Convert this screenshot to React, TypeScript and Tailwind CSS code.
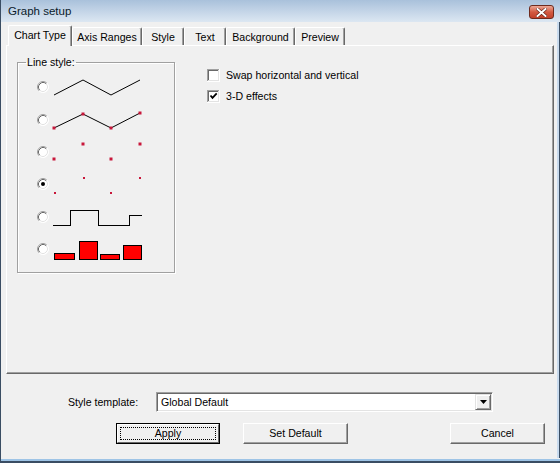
import React from "react";

const tabs = [
  { label: "Chart Type", w: "w-[64px]" },
  { label: "Axis Ranges", w: "w-[70px]" },
  { label: "Style", w: "w-[42px]" },
  { label: "Text", w: "w-[42px]" },
  { label: "Background", w: "w-[69px]" },
  { label: "Preview", w: "w-[50px]" },
];

function Radio({ checked = false }: { checked?: boolean }) {
  return (
    <svg width="12" height="12" viewBox="0 0 12 12" className="shrink-0">
      <circle cx="6" cy="6" r="5.5" fill="#fff" />
      <path d="M9.89 2.11 A5.5 5.5 0 0 0 2.11 9.89" fill="none" stroke="#a0a0a0" />
      <path d="M2.11 9.89 A5.5 5.5 0 0 0 9.89 2.11" fill="none" stroke="#ffffff" />
      <path d="M9.18 2.82 A4.5 4.5 0 0 0 2.82 9.18" fill="none" stroke="#696969" />
      <path d="M2.82 9.18 A4.5 4.5 0 0 0 9.18 2.82" fill="none" stroke="#e3e3e3" />
      {checked && <circle cx="6" cy="6" r="2" fill="#000" />}
    </svg>
  );
}

function Checkbox({ checked = false }: { checked?: boolean }) {
  return (
    <svg width="13" height="13" viewBox="0 0 13 13" className="shrink-0" shapeRendering="crispEdges">
      <rect x="0" y="0" width="13" height="13" fill="#fff" />
      <path d="M0.5 12 V0.5 H12" fill="none" stroke="#a0a0a0" />
      <path d="M1.5 11 V1.5 H11" fill="none" stroke="#696969" />
      <path d="M0 12.5 H12.5 V0" fill="none" stroke="#ffffff" />
      <path d="M1 11.5 H11.5 V1" fill="none" stroke="#e3e3e3" />
      {checked && (
        <path d="M3.5 5.5 L5.5 7.8 L9.7 3.4" fill="none" stroke="#000" strokeWidth="1.8" shapeRendering="auto" />
      )}
    </svg>
  );
}

const red = "#c8173a";

// one sample drawing per line style, row centre at y=12
function Sample({ kind }: { kind: number }) {
  const zig = [
    [4, 20],
    [33, 5],
    [61, 20],
    [90, 5],
  ];
  return (
    <svg width="96" height="24" viewBox="0 0 96 24" className="shrink-0">
      {kind === 0 && <polyline points="4,20 33,5 61,20 90,5" fill="none" stroke="#000" />}
      {kind === 1 && (
        <>
          <polyline points="4,20 33,6 61,20 90,5" fill="none" stroke="#000" />
          {[[4, 20], [33, 6], [61, 20], [90, 5]].map(([x, y]) => (
            <rect key={x} x={x - 1.5} y={y - 1.5} width="3" height="3" fill={red} />
          ))}
        </>
      )}
      {kind === 2 &&
        [[4, 19], [33, 4], [61, 19], [90, 4]].map(([x, y]) => (
          <rect key={x} x={x - 1.5} y={y - 1.5} width="3" height="3" fill={red} />
        ))}
      {kind === 3 &&
        [[5, 21], [34, 6], [61, 21], [90, 6]].map(([x, y]) => (
          <rect key={x} x={x - 1} y={y - 1} width="2" height="2" fill={red} />
        ))}
      {kind === 4 && (
        <polyline
          points="3,20.5 20.5,20.5 20.5,5.5 48.5,5.5 48.5,20.5 79.5,20.5 79.5,10.5 92,10.5"
          fill="none"
          stroke="#000"
          shapeRendering="crispEdges"
        />
      )}
      {kind === 5 && (
        <g shapeRendering="crispEdges" fill="#ff0000" stroke="#000">
          <rect x="4.5" y="16.5" width="20" height="6" />
          <rect x="29.5" y="4.5" width="18" height="18" />
          <rect x="50.5" y="17.5" width="19" height="5" />
          <rect x="73.5" y="8.5" width="18" height="14" />
        </g>
      )}
      {zig.length === 0 && null}
    </svg>
  );
}

function Button({ label, w, ml, isDefault = false }: { label: string; w: string; ml: string; isDefault?: boolean }) {
  if (isDefault) {
    return (
      <div className={`${w} ${ml} h-[21px] border border-black`}>
        <div className="h-full border border-t-white border-l-white border-r-[#696969] border-b-[#696969] p-[2px]">
          <div className="h-full border border-dotted border-black flex items-center justify-center leading-[13px]">
            {label}
          </div>
        </div>
      </div>
    );
  }
  return (
    <div
      className={`${w} ${ml} h-[21px] border border-t-white border-l-white border-r-[#696969] border-b-[#696969] shadow-[inset_-1px_-1px_0_#a0a0a0] flex items-center justify-center leading-[13px]`}
    >
      {label}
    </div>
  );
}

export default function App() {
  return (
    <div className="w-[560px] h-[463px] flex flex-col bg-[#f0f0f0] border-l border-[#3a4d63] text-[10.6px] text-black font-['Liberation_Sans',Arial,sans-serif] overflow-hidden">
      {/* Title bar */}
      <div className="h-[22px] shrink-0 flex items-center justify-between pl-[7px] pr-[6px] bg-linear-to-b from-[#a9c1db] via-[#c3d4e7] to-[#dce7f2]">
        <span className="text-[11.5px] leading-[14px] text-[#0a1a2a]">Graph setup</span>
        <div className="mt-[2px] w-[25px] h-[14px] rounded-[3px] border border-[#6e2b1e] bg-linear-to-b from-[#eba796] via-[#d35a42] to-[#c2402a] flex items-center justify-center">
          <svg width="11" height="9" viewBox="0 0 11 9">
            <path d="M1.5 1 L9.5 8 M9.5 1 L1.5 8" stroke="#5a1a10" strokeWidth="3.2" strokeLinecap="square" />
            <path d="M1.5 1 L9.5 8 M9.5 1 L1.5 8" stroke="#fff" strokeWidth="2" strokeLinecap="square" />
          </svg>
        </div>
      </div>

      <div className="flex-1 flex">
        <div className="flex-1 flex flex-col">
          {/* Tab strip */}
          <div className="mt-[3px] ml-[7px] h-[20px] flex items-end">
            {tabs.map((t, i) =>
              i === 0 ? (
                <div
                  key={t.label}
                  className={`${t.w} relative z-10 -mb-[1px] h-[21px] bg-[#f0f0f0] border-l border-t border-r border-l-white border-t-white border-r-[#696969] shadow-[inset_-1px_0_0_#a0a0a0] rounded-t-[2px] text-center pt-[3px] leading-[13px]`}
                >
                  {t.label}
                </div>
              ) : (
                <div
                  key={t.label}
                  className={`${t.w} h-[18px] border-l border-t border-r border-l-white border-t-white border-r-[#696969] shadow-[inset_-1px_0_0_#a0a0a0] rounded-t-[2px] text-center pt-[3px] leading-[13px]`}
                >
                  {t.label}
                </div>
              )
            )}
          </div>

          {/* Tab page */}
          <div className="ml-[5px] w-[548px] h-[329px] border border-t-white border-l-white border-r-[#696969] border-b-[#696969] shadow-[inset_-1px_-1px_0_#a0a0a0] pl-[10px] pt-[10px] flex items-start">
            <fieldset className="w-[158px] border border-[#a0a0a0] shadow-[inset_1px_1px_0_#fff,1px_1px_0_#fff] pt-[2px] pb-[7px]">
              <legend className="ml-[8px] px-[1px] leading-[13px]">Line style:</legend>
              {[0, 1, 2, 3, 4, 5].map((k) => (
                <div key={k} className="h-[32.4px] flex items-center pl-[19px] gap-[1px]">
                  <Radio checked={k === 3} />
                  <Sample kind={k} />
                </div>
              ))}
            </fieldset>

            <div className="ml-[32px] mt-[9px] flex flex-col">
              <label className="h-[21px] flex items-center gap-[6px]">
                <Checkbox />
                <span className="leading-[13px]">Swap horizontal and vertical</span>
              </label>
              <label className="h-[21px] flex items-center gap-[6px]">
                <Checkbox checked />
                <span className="leading-[13px]">3-D effects</span>
              </label>
            </div>
          </div>

          {/* Style template */}
          <div className="mt-[18px] h-[20px] flex items-center">
            <span className="ml-[67px] w-[88px] leading-[13px]">Style template:</span>
            <div className="w-[337px] h-[20px] bg-white border border-t-[#a0a0a0] border-l-[#a0a0a0] border-r-white border-b-white shadow-[inset_1px_1px_0_#696969,inset_-1px_-1px_0_#e3e3e3] flex items-center">
              <span className="flex-1 pl-[4px] leading-[13px]">Global Default</span>
              <div className="w-[16px] h-[16px] mr-[1px] bg-[#f0f0f0] border border-t-[#e3e3e3] border-l-[#e3e3e3] border-r-[#696969] border-b-[#696969] shadow-[inset_1px_1px_0_#fff,inset_-1px_-1px_0_#a0a0a0] flex items-center justify-center">
                <svg width="7" height="4" viewBox="0 0 7 4">
                  <path d="M0 0 H7 L3.5 4 Z" fill="#000" />
                </svg>
              </div>
            </div>
          </div>

          {/* Buttons */}
          <div className="mt-[11px] flex">
            <Button label="Apply" w="w-[104px]" ml="ml-[115px]" isDefault />
            <Button label="Set Default" w="w-[105px]" ml="ml-[23px]" />
            <Button label="Cancel" w="w-[95px]" ml="ml-[102px]" />
          </div>
        </div>
        <div className="w-[3px] border-l-2 border-[#c9dbee] border-r border-r-[#3a4d63]" />
      </div>

      {/* Bottom frame */}
      <div className="h-[5px] shrink-0 bg-[#f0f0f0] border-b-2 border-b-[#3a4d63] shadow-[inset_0_-2px_0_#9ec4e6]" />
    </div>
  );
}
